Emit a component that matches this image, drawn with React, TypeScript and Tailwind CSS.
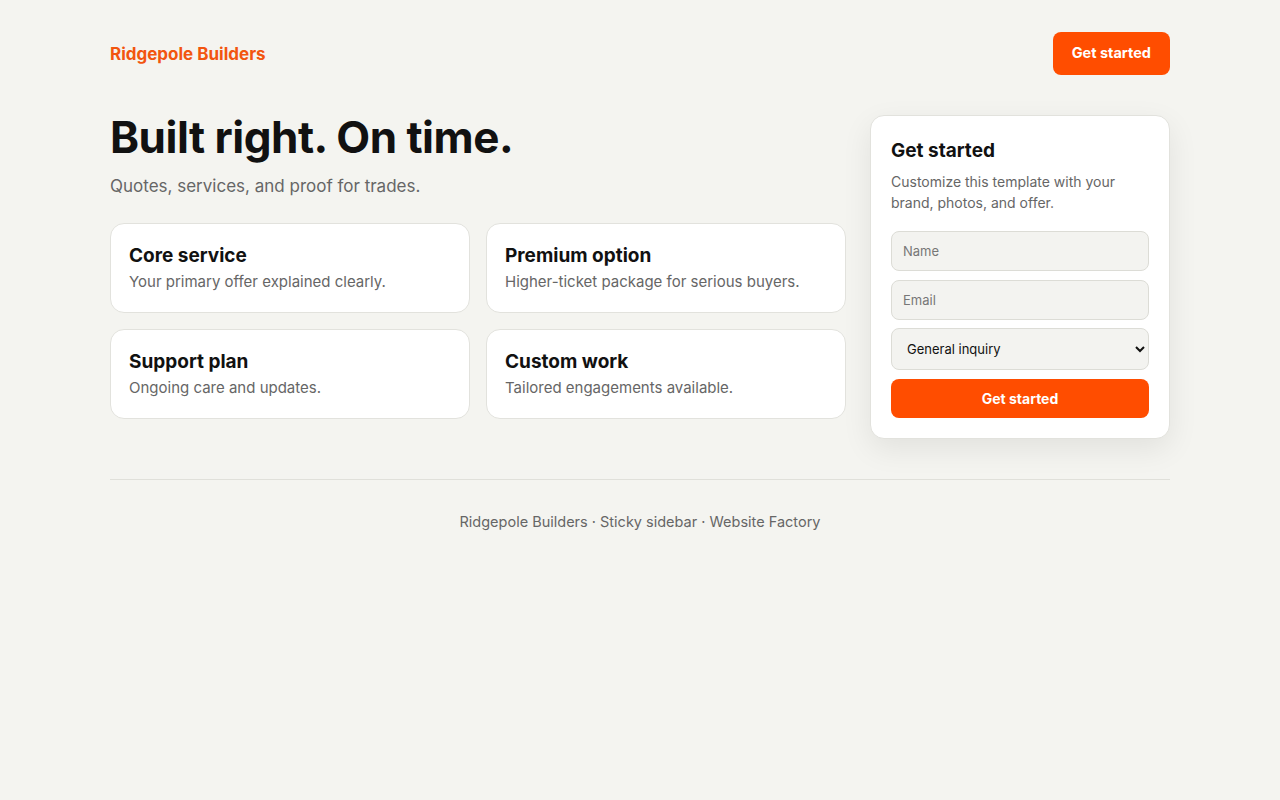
import React from "react";

const font = { fontFamily: "Inter, 'Noto Sans', sans-serif" };

function Card({ title, text }: { title: string; text: string }) {
  return (
    <div className="flex h-[90px] flex-col justify-center rounded-[14px] border border-[#e2e2dd] bg-white px-[18px]">
      <h3 className="text-[19px] font-bold leading-[26px] text-[#111]">{title}</h3>
      <p className="mt-[2px] text-[15px] leading-[22px] text-[#666]">{text}</p>
    </div>
  );
}

export default function App() {
  return (
    <div className="min-h-[800px] bg-[#f4f4f0]" style={font}>
      <div className="mx-auto w-[1060px]">
        <header className="flex h-[106px] items-center justify-between">
          <div className="mt-[3px] text-[17px] font-bold text-[#f2550f]">Ridgepole Builders</div>
          <button className="h-[43px] rounded-[8px] bg-[#ff4d00] px-[19px] text-[14.5px] font-bold text-white">
            Get started
          </button>
        </header>
        <main className="flex items-start gap-[24px] pt-[9px]">
          <div className="flex-1">
            <h1 className="text-[44px] font-bold leading-[44px] tracking-[-0.5px] text-[#111]">
              Built right. On time.
            </h1>
            <p className="mt-[15px] text-[17px] leading-[24px] text-[#666]">
              Quotes, services, and proof for trades.
            </p>
            <div className="mt-[25px] grid grid-cols-2 gap-[16px]">
              <Card title="Core service" text="Your primary offer explained clearly." />
              <Card title="Premium option" text="Higher-ticket package for serious buyers." />
              <Card title="Support plan" text="Ongoing care and updates." />
              <Card title="Custom work" text="Tailored engagements available." />
            </div>
          </div>
          <aside className="w-[300px] rounded-[14px] border border-[#e2e2dd] bg-white p-[20px] shadow-[0_10px_30px_rgba(0,0,0,0.08)]">
            <h2 className="mt-[2px] text-[19px] font-bold leading-[26px] text-[#111]">Get started</h2>
            <p className="mt-[7px] text-[14px] leading-[21px] text-[#666]">
              Customize this template with your brand, photos, and offer.
            </p>
            <form className="mt-[18px] flex flex-col">
              <input
                placeholder="Name"
                className="h-[40px] rounded-[8px] border border-[#dcdcd6] bg-[#f3f3f0] px-[11px] text-[13px] text-[#111] outline-none placeholder:text-[#777]"
              />
              <input
                placeholder="Email"
                className="mt-[9px] h-[40px] rounded-[8px] border border-[#dcdcd6] bg-[#f3f3f0] px-[11px] text-[13px] text-[#111] outline-none placeholder:text-[#777]"
              />
              <select className="mt-[8px] h-[42px] rounded-[8px] border border-[#dcdcd6] bg-[#f3f3f0] px-[11px] text-[13px] text-[#111] outline-none">
                <option>General inquiry</option>
              </select>
              <button
                type="button"
                className="mt-[9px] h-[39px] rounded-[8px] bg-[#ff4d00] text-[14px] font-bold text-white"
              >
                Get started
              </button>
            </form>
          </aside>
        </main>
        <footer className="mt-[40px] border-t border-[#e0e0da] pt-[32px] text-center text-[14.5px] leading-[20px] text-[#666]">
          Ridgepole Builders · Sticky sidebar · Website Factory
        </footer>
      </div>
    </div>
  );
}
